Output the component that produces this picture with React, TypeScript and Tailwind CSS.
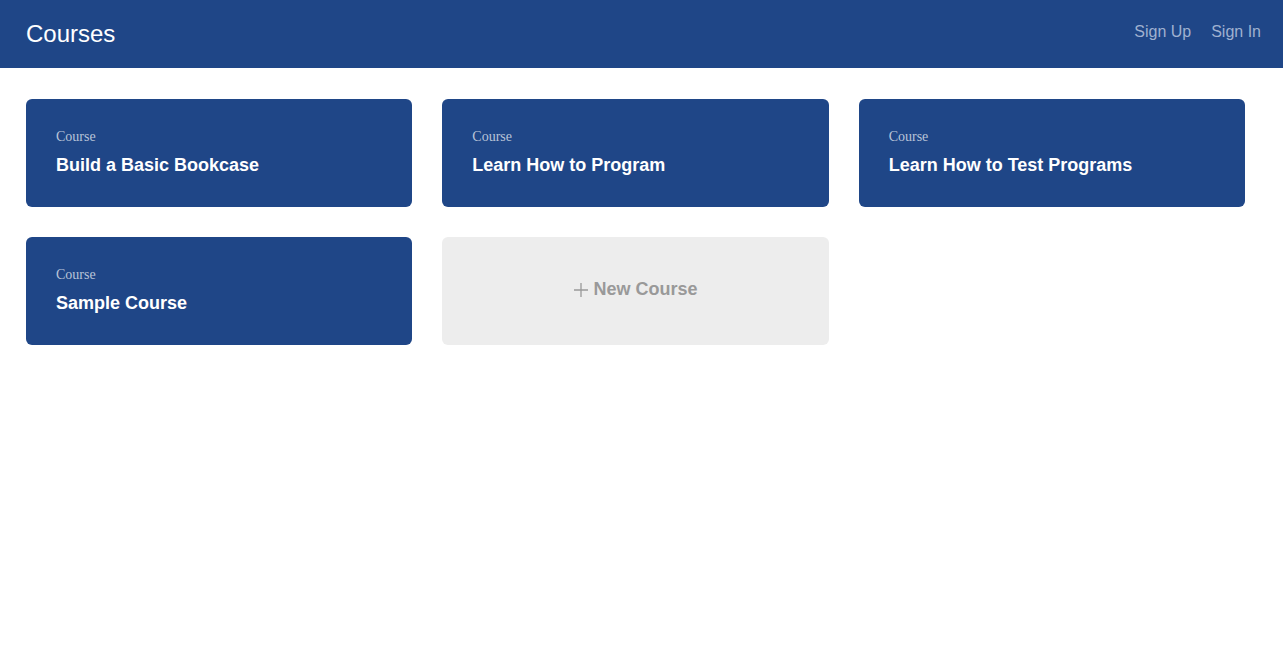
import React from "react";

const courses = [
  "Build a Basic Bookcase",
  "Learn How to Program",
  "Learn How to Test Programs",
  "Sample Course",
];

export default function App() {
  return (
    <div className="min-h-screen bg-white" style={{ fontFamily: '"Liberation Sans", Arial, sans-serif' }}>
      <header className="h-[68px] bg-[#1f4687] flex items-center justify-between pl-[26px] pr-[22px]">
        <h1 className="text-[24px] text-white leading-none">Courses</h1>
        <nav className="flex items-center gap-[20px] text-[16px] text-[#9fb1d0] -mt-[4px]">
          <a>Sign Up</a>
          <a>Sign In</a>
        </nav>
      </header>
      <main className="pl-[26px] pr-[38px] pt-[31px]">
        <div className="grid grid-cols-3 gap-x-[30px] gap-y-[30px]">
          {courses.map((c) => (
            <div key={c} className="h-[108px] rounded-[6px] bg-[#1f4687] px-[30px] pt-[31px]">
              <div className="text-[14px] text-[#b9c4d8] leading-none" style={{ fontFamily: '"Liberation Serif", "Times New Roman", serif' }}>
                Course
              </div>
              <div className="mt-[12px] text-[18px] font-bold text-white leading-none">{c}</div>
            </div>
          ))}
          <div className="h-[108px] rounded-[6px] bg-[#ededed] flex items-center justify-center">
            <span className="text-[18px] font-bold text-[#999999] flex items-center gap-[4px] -mt-[3px]">
              <svg width="16" height="16" viewBox="0 0 16 16" className="mt-[1px]">
                <path d="M8 1v14M1 8h14" stroke="#999999" strokeWidth="1.3" fill="none" />
              </svg>
              New Course
            </span>
          </div>
        </div>
      </main>
    </div>
  );
}
